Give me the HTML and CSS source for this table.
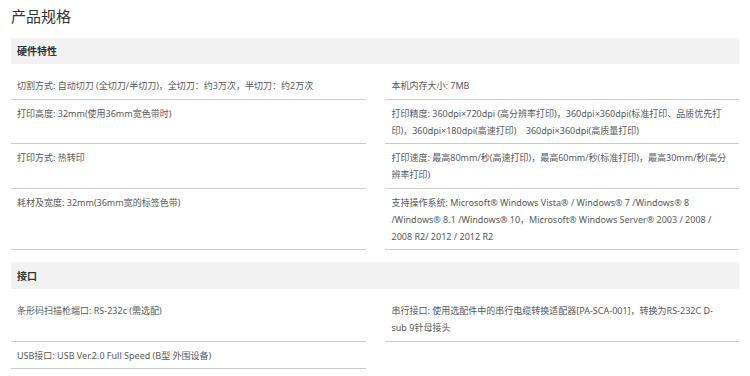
FILE: index.html
```html
<!DOCTYPE html>
<html lang="zh-CN">
<head>
<meta charset="utf-8">
<title>产品规格</title>
<link rel="stylesheet" href="styles.css">
</head>
<body>
<div class="page">
  <h1 class="title">产品规格</h1>

  <section class="spec">
    <h2 class="spec-head">硬件特性</h2>
    <div class="spec-grid">
      <div class="cell">切割方式: 自动切刀 (全切刀/半切刀)，全切刀：约3万次，半切刀：约2万次</div>
      <div class="cell">本机内存大小: 7MB</div>
      <div class="cell">打印高度: 32mm(使用36mm宽色带时)</div>
      <div class="cell">打印精度: 360dpi×720dpi (高分辨率打印)，360dpi×360dpi(标准打印、品质优先打印)，360dpi×180dpi(高速打印)&nbsp;&nbsp;&nbsp; 360dpi×360dpi(高质量打印)</div>
      <div class="cell">打印方式: 热转印</div>
      <div class="cell">打印速度: 最高80mm/秒(高速打印)，最高60mm/秒(标准打印)，最高30mm/秒(高分辨率打印)</div>
      <div class="cell">耗材及宽度: 32mm(36mm宽的标签色带)</div>
      <div class="cell">支持操作系统: Microsoft® Windows Vista® / Windows® 7 /Windows® 8 /Windows® 8.1 /Windows® 10，Microsoft® Windows Server® 2003 / 2008 / 2008 R2/ 2012 / 2012 R2</div>
    </div>
  </section>

  <section class="spec">
    <h2 class="spec-head">接口</h2>
    <div class="spec-grid">
      <div class="cell">条形码扫描枪端口: RS-232c (需选配)</div>
      <div class="cell">串行接口: 使用选配件中的串行电缆转换适配器[PA-SCA-001]，转换为RS-232C D-sub 9针母接头</div>
      <div class="cell">USB接口: USB Ver.2.0 Full Speed (B型 外围设备)</div>
      <div class="cell cell-empty"></div>
    </div>
  </section>
</div>
</body>
</html>
```

FILE: styles.css
```css
* {
  box-sizing: border-box;
}

body {
  margin: 0;
  background: #ffffff;
  font-family: "Noto Sans", "Noto Sans CJK SC", sans-serif;
  color: #555555;
}

.page {
  padding: 5px 11px 0 11px;
}

.title {
  margin: 0 0 11px 0;
  font-family: "Noto Sans CJK SC", sans-serif;
  font-size: 15px;
  line-height: 22px;
  font-weight: normal;
  color: #333333;
}

.spec {
  margin-bottom: 12px;
}

.spec-head {
  margin: 0;
  height: 26px;
  padding-left: 6px;
  background: #f2f2f2;
  font-family: "Noto Sans CJK SC", sans-serif;
  font-size: 10px;
  line-height: 26px;
  font-weight: bold;
  color: #333333;
}

.spec + .spec .spec-head {
  height: 27px;
  line-height: 27px;
}

.spec-grid {
  display: grid;
  grid-template-columns: 1fr 1fr;
  column-gap: 19px;
  margin-top: 8px;
}

.cell {
  padding: 5px 12px 4.5px 6px;
  border-bottom: 1px solid #cccccc;
  font-size: 9px;
  line-height: 17px;
  color: #595959;
}

.cell:nth-child(even) {
  padding-left: 7px;
}

.cell-empty {
  border-bottom: none;
}
```
